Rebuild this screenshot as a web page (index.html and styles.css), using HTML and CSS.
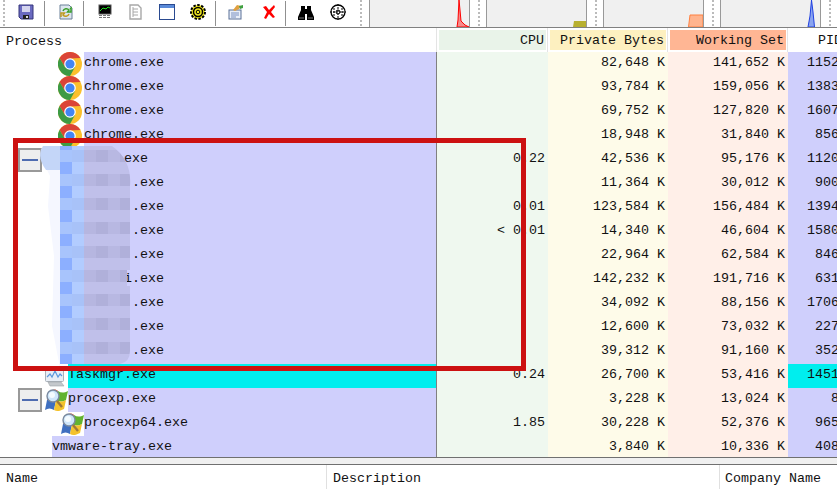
FILE: index.html
```html
<!DOCTYPE html>
<html lang="en">
<head>
  <meta charset="UTF-8" />
  <title>Process Explorer</title>
  <link rel="stylesheet" href="styles.css">
</head>
<body>
  <svg class="defs" width="0" height="0">
    <defs>
      <symbol id="ico-chrome" viewBox="0 0 24 24">
        <circle cx="12" cy="12" r="12" fill="#fbc02d"/>
        <path d="M1.6 6A12 12 0 0 1 22.4 6L12 6.5 7 15Z" fill="#db4437"/>
        <path d="M1.6 6A12 12 0 0 0 12 24L17 15 7 15Z" fill="#3d9a45"/>
        <circle cx="12" cy="12" r="5.8" fill="#fff"/>
        <circle cx="12" cy="12" r="4.6" fill="#4285f4"/>
      </symbol>
      <symbol id="ico-procexp" viewBox="0 0 24 24">
        <path d="M6 3C9 1 12 1 14 3L12 12C9 10 6 10 3 12Z" fill="#e8532b"/>
        <path d="M14 3C17 5 20 5 24 3L22 12C18 14 15 14 12 12Z" fill="#62b32f"/>
        <path d="M3 12C6 10 9 10 12 12L10 22C7 20 4 20 1 22Z" fill="#3f6fc0"/>
        <path d="M12 12C15 14 18 14 22 12L20 21C16 23 13 24 10 22Z" fill="#f4c22c"/>
        <circle cx="9" cy="8" r="6" fill="#cfe6fb" stroke="#7a8aa0" stroke-width="1.4"/>
        <circle cx="8" cy="7" r="3" fill="#f4fbff"/>
        <path d="M13 13L18 19" stroke="#a07838" stroke-width="2.4"/>
      </symbol>
    </defs>
  </svg>

  <div class="toolbar">
    <i class="grip"></i>
    <div class="tb-group first">
      <svg width="16" height="16" viewBox="0 0 16 16"><path d="M1 1H15V15H3L1 13Z" fill="#6a6ac0" stroke="#34347a"/><rect x="4" y="2" width="8" height="6" fill="#d4d4ee"/><rect x="5" y="11" width="6" height="4" fill="#222"/><rect x="8" y="12" width="2" height="2" fill="#ddd"/></svg>
    </div>
    <i class="sep"></i>
    <div class="tb-group second">
      <svg width="16" height="16" viewBox="0 0 16 16"><path d="M2 1H11L14 4V15H2Z" fill="#dce6ee" stroke="#6a8098"/><path d="M5 7A3.5 3.5 0 0 1 11 6L9.500 8H13V4L12 5" fill="none" stroke="#3aa02a" stroke-width="1.500"/><path d="M11 10A3.500 3.500 0 0 1 5 11L6.500 9H3V13" fill="none" stroke="#c09a20" stroke-width="1.500"/></svg>
    </div>
    <i class="sep"></i>
    <div class="tb-group third">
      <svg width="16" height="16" viewBox="0 0 16 16"><rect x="2" y="1" width="12" height="9" fill="#000" stroke="#555"/><path d="M3 7L6 4 9 5 11 3 13 4" fill="none" stroke="#20e020"/><path d="M2 11.500H14M2 13.500H14" stroke="#777" stroke-dasharray="3 1"/></svg>
      <svg class="nudge" width="16" height="16" viewBox="0 0 16 16"><path d="M3 1H11L14 4V15H3Z" fill="#fff" stroke="#a8a8a8" stroke-width="1.400"/><path d="M6 5H11M6 8H11M6 11H11M6 3V13" stroke="#a8a8a8"/></svg>
      <svg width="16" height="16" viewBox="0 0 16 16"><rect x="0.500" y="0.500" width="15" height="15" fill="#fff" stroke="#2a4a90"/><rect x="1" y="1" width="14" height="3" fill="#5a8ad8"/></svg>
      <svg width="16" height="16" viewBox="0 0 16 16"><circle cx="8" cy="8" r="7" fill="#f2ea20" stroke="#000" stroke-width="2" stroke-dasharray="2.500 1.500"/><circle cx="8" cy="8" r="4.500" fill="#f2ea20" stroke="#000" stroke-width="1.500"/><circle cx="8" cy="8" r="1.800" fill="#f2ea20" stroke="#000"/></svg>
    </div>
    <i class="sep"></i>
    <div class="tb-group fourth">
      <svg width="16" height="16" viewBox="0 0 16 16"><rect x="1" y="6" width="12" height="9" fill="#e8eef8" stroke="#5a7098"/><path d="M3 9H11M3 11H11M3 13H8" stroke="#7a90c0"/><path d="M5 6L9 1 13 2 11 5 7 7Z" fill="#e0a040"/><path d="M11 2L15 1 15 4 12 5Z" fill="#40a040"/></svg>
      <svg width="16" height="16" viewBox="0 0 16 16"><path d="M2 3L5 2 8 6 13 1 14 3 10 8 14 13 12 14 8 10 5 15 3 14 6 8Z" fill="#f00"/></svg>
    </div>
    <i class="sep"></i>
    <div class="tb-group fifth">
      <svg width="16" height="16" viewBox="0 0 16 16"><path d="M3 2H7V5H9V2H13V6L16 13V16H9V10H7V16H0V13L3 6Z" fill="#000"/><path d="M1 14H6M10 14H15" stroke="#777"/></svg>
      <svg width="16" height="16" viewBox="0 0 16 16"><circle cx="8" cy="8" r="7" fill="#fff" stroke="#000" stroke-width="1.300"/><circle cx="8" cy="8" r="2" fill="none" stroke="#000"/><path d="M8 0V16M0 8H16M4 4V12M12 4V12" stroke="#000" stroke-dasharray="2 1"/></svg>
    </div>
    <i class="grip end"></i>
    <svg class="graph" width="99" height="27" viewBox="0 0 99 27"><path d="M87 27L88 20 89 0 90 10 91 21 95 25 99 27Z" fill="#f58a8a" stroke="#f00"/></svg>
    <i class="grip mid"></i>
    <svg class="graph" width="99" height="27" viewBox="0 0 99 27"><path d="M86 27L87 21H99V27Z" fill="#b8b030"/></svg>
    <i class="grip mid"></i>
    <svg class="graph" width="99" height="27" viewBox="0 0 99 27"><path d="M84.500 27L86 15H99V27Z" fill="#ffb48e" stroke="#ff8040"/></svg>
    <i class="grip mid"></i>
    <svg class="graph" width="99" height="27" viewBox="0 0 99 27"><path d="M87 27L89 16 90.500 0 92 12 93.500 27Z" fill="#8aa4f0" stroke="#2040e0"/></svg>
    <i class="grip mid"></i>
  </div>

  <div class="table">
    <div class="row head">
      <div class="cell name">Process</div>
      <div class="cell cpu"><span>CPU</span></div>
      <div class="cell priv"><span>Private Bytes</span></div>
      <div class="cell ws"><span>Working Set</span></div>
      <div class="cell pid"><span>PID</span></div>
    </div>

    <div class="row">
      <div class="cell name lv3"><svg class="ico shift"><use href="#ico-chrome"/></svg><span class="label">chrome.exe</span></div>
      <div class="cell cpu"></div><div class="cell priv">82,648 K</div><div class="cell ws">141,652 K</div><div class="cell pid">1152</div>
    </div>
    <div class="row">
      <div class="cell name lv3"><svg class="ico shift"><use href="#ico-chrome"/></svg><span class="label">chrome.exe</span></div>
      <div class="cell cpu"></div><div class="cell priv">93,784 K</div><div class="cell ws">159,056 K</div><div class="cell pid">1383</div>
    </div>
    <div class="row">
      <div class="cell name lv3"><svg class="ico shift"><use href="#ico-chrome"/></svg><span class="label">chrome.exe</span></div>
      <div class="cell cpu"></div><div class="cell priv">69,752 K</div><div class="cell ws">127,820 K</div><div class="cell pid">1607</div>
    </div>
    <div class="row">
      <div class="cell name lv3"><svg class="ico shift"><use href="#ico-chrome"/></svg><span class="label">chrome.exe</span></div>
      <div class="cell cpu"></div><div class="cell priv">18,948 K</div><div class="cell ws">31,840 K</div><div class="cell pid">856</div>
    </div>

    <div class="row">
      <div class="cell name lv1"><i class="toggle"></i><span class="ico"></span><span class="label label-parent">.exe</span></div>
      <div class="cell cpu">0.22</div><div class="cell priv">42,536 K</div><div class="cell ws">95,176 K</div><div class="cell pid">1120</div>
    </div>
    <div class="row">
      <div class="cell name lv3"><span class="ico"></span><span class="label">      .exe</span></div>
      <div class="cell cpu"></div><div class="cell priv">11,364 K</div><div class="cell ws">30,012 K</div><div class="cell pid">900</div>
    </div>
    <div class="row">
      <div class="cell name lv3"><span class="ico"></span><span class="label">      .exe</span></div>
      <div class="cell cpu">0.01</div><div class="cell priv">123,584 K</div><div class="cell ws">156,484 K</div><div class="cell pid">1394</div>
    </div>
    <div class="row">
      <div class="cell name lv3"><span class="ico"></span><span class="label">      .exe</span></div>
      <div class="cell cpu">&lt; 0.01</div><div class="cell priv">14,340 K</div><div class="cell ws">46,604 K</div><div class="cell pid">1580</div>
    </div>
    <div class="row">
      <div class="cell name lv3"><span class="ico"></span><span class="label">      .exe</span></div>
      <div class="cell cpu"></div><div class="cell priv">22,964 K</div><div class="cell ws">62,584 K</div><div class="cell pid">846</div>
    </div>
    <div class="row">
      <div class="cell name lv3"><span class="ico"></span><span class="label">     i.exe</span></div>
      <div class="cell cpu"></div><div class="cell priv">142,232 K</div><div class="cell ws">191,716 K</div><div class="cell pid">631</div>
    </div>
    <div class="row">
      <div class="cell name lv3"><span class="ico"></span><span class="label">      .exe</span></div>
      <div class="cell cpu"></div><div class="cell priv">34,092 K</div><div class="cell ws">88,156 K</div><div class="cell pid">1706</div>
    </div>
    <div class="row">
      <div class="cell name lv3"><span class="ico"></span><span class="label">      .exe</span></div>
      <div class="cell cpu"></div><div class="cell priv">12,600 K</div><div class="cell ws">73,032 K</div><div class="cell pid">227</div>
    </div>
    <div class="row">
      <div class="cell name lv3"><span class="ico"></span><span class="label">      .exe</span></div>
      <div class="cell cpu"></div><div class="cell priv">39,312 K</div><div class="cell ws">91,160 K</div><div class="cell pid">352</div>
    </div>

    <div class="row">
      <div class="cell name lv2"><svg class="ico" viewBox="0 0 24 24"><rect x="1.500" y="4.500" width="18" height="13" rx="1" fill="#e8eef6" stroke="#a8b0b8"/><path d="M3 13L6 10 8 13 11 7 14 13 16 10 18 12" fill="none" stroke="#5a98dc" stroke-width="1.200"/><path d="M4 18H17L20 22H6Z" fill="#c4c8cc" stroke="#a0a4a8" stroke-width="0.600"/></svg><span class="label hot">Taskmgr.exe</span></div>
      <div class="cell cpu">0.24</div><div class="cell priv">26,700 K</div><div class="cell ws">53,416 K</div><div class="cell pid hot">1451</div>
    </div>
    <div class="row">
      <div class="cell name lv1"><i class="toggle"></i><svg class="ico"><use href="#ico-procexp"/></svg><span class="label">procexp.exe</span></div>
      <div class="cell cpu"></div><div class="cell priv">3,228 K</div><div class="cell ws">13,024 K</div><div class="cell pid">8</div>
    </div>
    <div class="row">
      <div class="cell name lv3"><svg class="ico"><use href="#ico-procexp"/></svg><span class="label">procexp64.exe</span></div>
      <div class="cell cpu">1.85</div><div class="cell priv">30,228 K</div><div class="cell ws">52,376 K</div><div class="cell pid">965</div>
    </div>
    <div class="row">
      <div class="cell name lv-plain"><span class="label">vmware-tray.exe</span></div>
      <div class="cell cpu"></div><div class="cell priv">3,840 K</div><div class="cell ws">10,336 K</div><div class="cell pid">408</div>
    </div>

    <!-- pixelated patch hiding the process names -->
    <svg class="mosaic" width="100" height="224" viewBox="0 0 100 224">
      <defs>
        <pattern id="tiles" width="48" height="24" patternUnits="userSpaceOnUse" x="44" y="4">
          <rect width="12" height="12" fill="#b6b6e0"/><rect x="12" width="12" height="12" fill="#b0b0da"/>
          <rect x="24" width="12" height="12" fill="#b8b8e2"/><rect x="36" width="12" height="12" fill="#b0b0da"/>
          <rect y="12" width="48" height="12" fill="#c0c0ea"/>
        </pattern>
        <pattern id="blues" width="24" height="24" patternUnits="userSpaceOnUse" x="20" y="4">
          <rect width="12" height="12" fill="#a8c4fc"/><rect x="12" width="12" height="12" fill="#a8c2f8"/>
          <rect y="12" width="12" height="12" fill="#8cafff"/><rect x="12" y="12" width="12" height="12" fill="#b2ccff"/>
        </pattern>
      </defs>
      <path d="M20 0H3Q-3 8 5 20L10 30 8 60 14 110 12 180 20 222Z" fill="#f5f7ff"/>
      <path d="M20 0H3Q-4 10 6 24H20Z" fill="#c4d6f8"/>
      <rect x="20" y="0" width="24" height="218" fill="url(#blues)"/>
      <path d="M44 0H72Q92 14 90 40V124H87V140H90V205Q90 216 80 218H44Z" fill="url(#tiles)"/>
    </svg>

    <div class="callout"></div>
  </div>

  <div class="splitter"></div>

  <div class="lower-head">
    <div class="lower-col col-name">Name</div>
    <div class="lower-col col-desc">Description</div>
    <div class="lower-col col-company">Company Name</div>
  </div>
</body>
</html>
```

FILE: styles.css
```css
html, body {
  margin: 0;
  height: 100%;
  overflow: hidden;
  background-color: white;
}
body {
  font-family: "Liberation Mono", monospace;
  font-size: 13.33px;
  color: #111;
  width: 837px;
}
.defs {
  position: absolute;
}

/* toolbar and graphs */
.toolbar {
  display: flex;
  align-items: center;
  height: 27px;
  border-bottom: 1px solid #808080;
  width: 860px;
}
.toolbar svg {
  display: block;
}
.grip {
  width: 2px;
  height: 27px;
  margin-left: 3px;
  background-image: repeating-linear-gradient(to bottom, #bbb 0 2px, white 2px 4px);
  flex-shrink: 0;
}
.grip.end {
  margin-left: 14px;
  margin-right: 7px;
}
.grip.mid {
  margin-left: 8px;
  margin-right: 6px;
}
.sep {
  width: 1px;
  height: 25px;
  background-color: #909090;
  flex-shrink: 0;
}
.tb-group {
  display: flex;
  flex-shrink: 0;
  margin-top: -4px;
}
.tb-group.first {
  margin-left: 13px;
  margin-right: 10px;
}
.tb-group.second {
  margin-left: 13px;
  margin-right: 9px;
}
.tb-group.third {
  gap: 15px;
  margin-left: 13px;
  margin-right: 9px;
}
.tb-group.third .nudge {
  margin-left: -1px;
  margin-right: 1px;
}
.tb-group.fourth {
  gap: 17px;
  margin-left: 12px;
  margin-right: 8px;
}
.tb-group.fifth {
  gap: 16px;
  margin-left: 12px;
}
.graph {
  flex-shrink: 0;
  background-color: #f0f0f0;
  border-left: 1px solid #999;
  border-right: 1px solid #999;
}

/* process table */
.table {
  position: relative;
  height: 429px;
  overflow: hidden;
}
.row {
  display: flex;
  height: 24px;
  line-height: 22px;
  width: 854px;
}
.cell {
  flex-shrink: 0;
  box-sizing: border-box;
  height: 24px;
  text-align: right;
  padding-right: 3px;
  white-space: pre;
}
.name {
  display: flex;
  width: 436px;
  padding-right: 0;
  text-align: left;
  border-right: 0;
}
.cpu {
  width: 112px;
  background-color: #eff8ef;
  border-left: 1px solid #808080;
}
.priv {
  width: 120px;
  background-color: #fefbe9;
}
.ws {
  width: 120px;
  background-color: #ffefe8;
}
.pid {
  width: 54px;
  background-color: #cfcffc;
}
.lv1 { padding-left: 18px; }
.lv2 { padding-left: 44px; }
.lv3 { padding-left: 60px; }
.lv-plain { padding-left: 52px; }
.ico {
  display: block;
  flex-shrink: 0;
  width: 24px;
  height: 24px;
}
.ico.shift {
  transform: translateX(-2px);
}
.label {
  flex: 1;
  background-color: #cfcffc;
}
.label-parent {
  padding-left: 48px;
}
.hot {
  background-color: #00eeee;
}
.toggle {
  display: block;
  position: relative;
  flex-shrink: 0;
  box-sizing: border-box;
  width: 24px;
  height: 24px;
  margin-right: 2px;
  border: 2px solid #999;
  background-color: #eee;
}
.toggle::after {
  content: "";
  position: absolute;
  left: 2px;
  top: 9px;
  width: 16px;
  height: 2px;
  background-color: #4f6cb0;
}

/* header row */
.head .cell {
  background-color: white;
  padding: 2px 1px 2px 2px;
  border-left: 0;
  border-right: 1px solid #e4e4e4;
}
.head .name {
  padding-left: 6px;
  padding-top: 2px;
  line-height: 24px;
  width: 437px;
}
.head .cell span {
  display: block;
  height: 20px;
  line-height: 22px;
  padding-right: 2px;
}
.head .cpu { width: 111px; }
.head .cpu span { background-color: #e9f3e9; }
.head .priv span { background-color: #fdf0c0; }
.head .ws span { background-color: #ffb694; }
.head .pid {
  width: 57px;
  border-right: 0;
}

/* red box drawn on top of the screenshot */
.callout {
  position: absolute;
  left: 13px;
  top: 110px;
  width: 513px;
  height: 233px;
  box-sizing: border-box;
  border: 5px solid #cc1111;
}
.mosaic {
  position: absolute;
  left: 40px;
  top: 118px;
}

/* lower pane */
.splitter {
  box-sizing: border-box;
  height: 8px;
  background-color: #f0f0f0;
  border-top: 1px solid #707070;
  border-bottom: 1px solid #707070;
}
.lower-head {
  display: flex;
  height: 24px;
  line-height: 28px;
}
.lower-col {
  box-sizing: border-box;
  padding-left: 6px;
  border-right: 1px solid #e0e0e0;
}
.col-name { width: 327px; }
.col-desc { width: 393px; }
.col-company {
  flex: 1;
  border-right: 0;
  padding-left: 5px;
}
```
